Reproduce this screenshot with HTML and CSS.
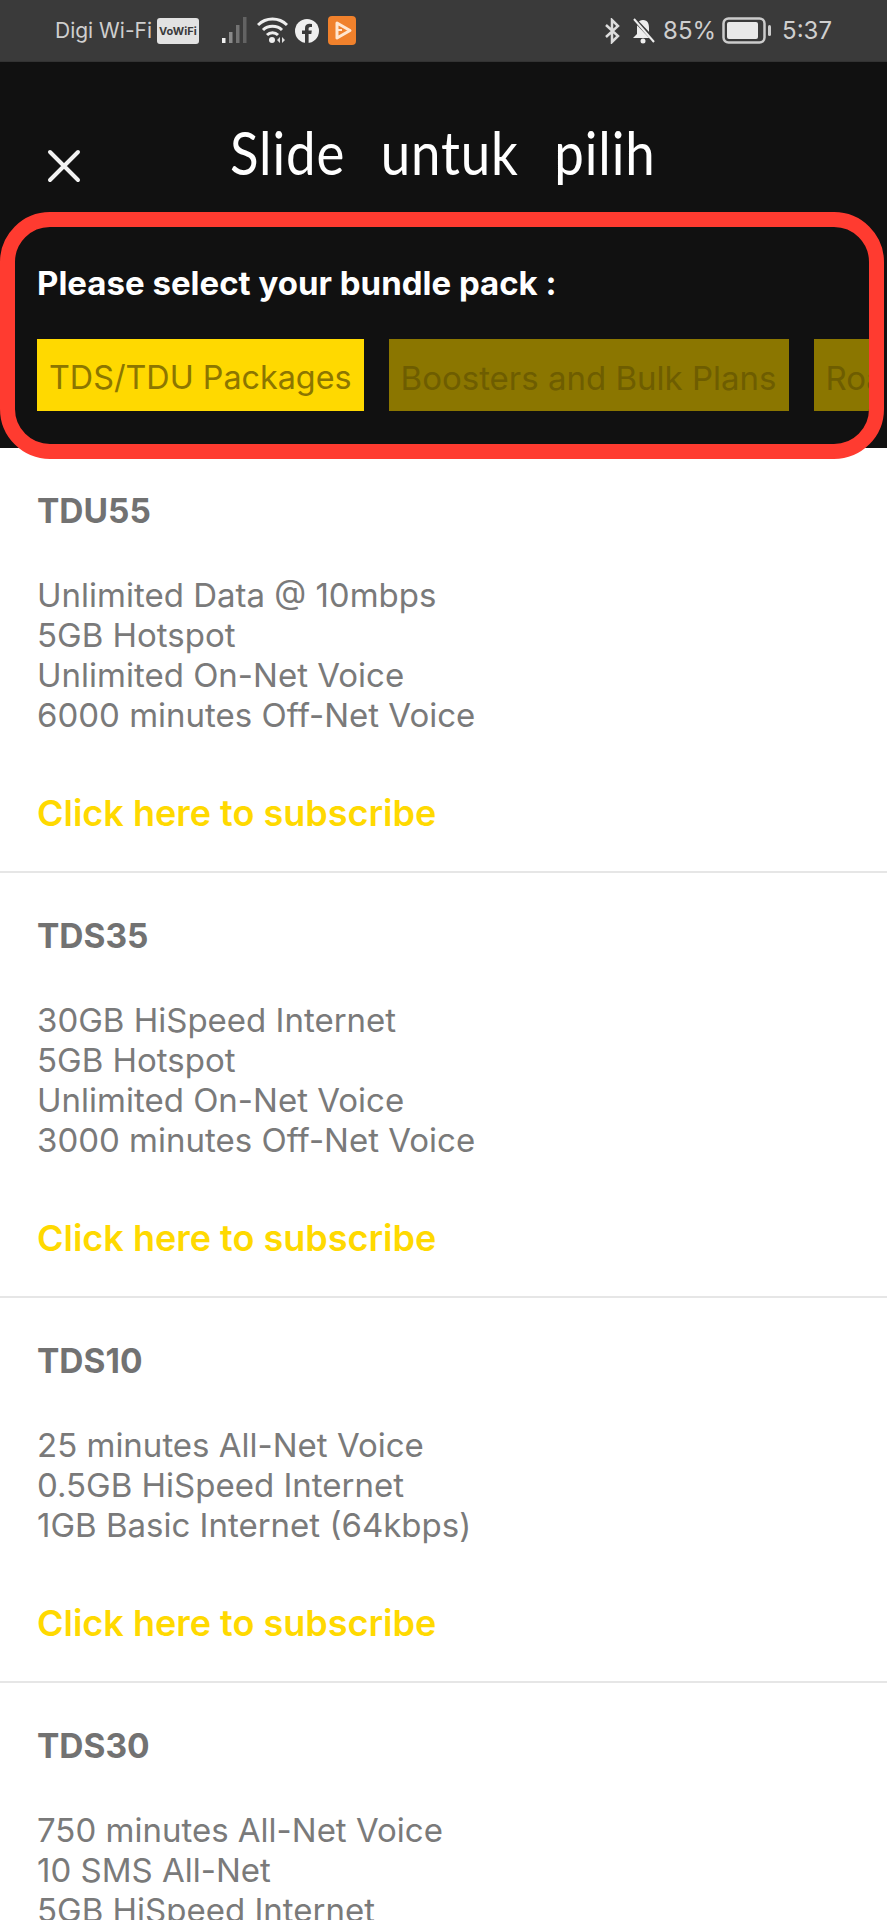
FILE: index.html
```html
<!DOCTYPE html>
<html lang="en">
<head>
  <meta charset="UTF-8">
  <title>Select bundle pack</title>
  <link rel="stylesheet" href="styles.css">
</head>
<body>
  <div class="screen">
    <div class="status-bar">
      <div class="status-left">
        <span class="carrier">Digi Wi-Fi</span>
        <span class="vowifi">VoWiFi</span>
        <svg class="signal" width="27" height="27" viewBox="0 0 27 27">
          <rect x="0" y="21" width="3.500" height="5" fill="#f0f0f0"/>
          <rect x="7" y="15" width="3.500" height="11" fill="#8a8a8a"/>
          <rect x="14" y="8" width="3.500" height="18" fill="#737373"/>
          <rect x="21" y="0" width="3.500" height="26" fill="#636363"/>
        </svg>
        <svg class="wifi" width="31" height="27" viewBox="0 0 31 27">
          <path d="M1 8 C9 0 22 0 30 8" fill="none" stroke="#eee" stroke-width="3"/>
          <path d="M6 13 C11 8 20 8 25 13" fill="none" stroke="#eee" stroke-width="3"/>
          <path d="M10 18 C13 15 18 15 21 18" fill="none" stroke="#eee" stroke-width="3"/>
          <circle cx="15" cy="23" r="3" fill="#eee"/>
          <path d="M23 20 L23 26 L20 23 Z M25 20 L25 26 L28 23 Z" fill="#ddd"/>
        </svg>
        <svg class="fb" width="24" height="24" viewBox="0 0 24 24">
          <circle cx="12" cy="12" r="12" fill="#eee"/>
          <path d="M10 24 V15 H7 V11.5 H10 V9 C10 6 12 4.700 14.500 4.700 L17 5 V8 H15.300 C14 8 13.600 8.800 13.600 9.600 V11.500 H16.800 L16.300 15 H13.600 V24 Z" fill="#3a3a3a"/>
        </svg>
        <svg class="app" width="28" height="29" viewBox="0 0 28 29">
          <rect width="28" height="29" rx="4" fill="#f0812c"/>
          <path d="M9 7 L22 14.500 L9 22 Z" fill="none" stroke="#ffe6d0" stroke-width="3" stroke-linejoin="round"/>
          <path d="M10 14 H14" stroke="#ffe6d0" stroke-width="2"/>
        </svg>
      </div>
      <div class="status-right">
        <svg width="19" height="26" viewBox="0 0 19 26">
          <path d="M3 7 L15 18 L9 24 V2 L15 8 L3 19" fill="none" stroke="#ddd" stroke-width="2.500"/>
        </svg>
        <svg class="bell" width="25" height="27" viewBox="0 0 25 27">
          <path d="M12 3 C7 3 6 7 6 11 V17 L2 21 H22 L18 17 V11 C18 7 17 3 12 3 Z" fill="#eee"/>
          <circle cx="12" cy="24" r="2.500" fill="#eee"/>
          <path d="M2 1 L24 24" stroke="#3a3a3a" stroke-width="4"/>
          <path d="M3 2 L23 25" stroke="#eee" stroke-width="2"/>
        </svg>
        <span class="percent">85%</span>
        <svg class="battery" width="50" height="28" viewBox="0 0 50 28">
          <rect x="1.500" y="1.500" width="41" height="24" rx="5" fill="none" stroke="#ccc" stroke-width="2.500"/>
          <rect x="5" y="5" width="31" height="17" rx="2" fill="#e8e8e8"/>
          <rect x="46" y="8" width="3" height="11" rx="1.500" fill="#ccc"/>
        </svg>
        <span class="clock">5:37</span>
      </div>
    </div>

    <div class="header">
      <div class="title-row">
        <svg class="close" width="34" height="34" viewBox="0 0 34 34">
          <path d="M3 3 L31 31 M31 3 L3 31" stroke="#f2f2f2" stroke-width="4" stroke-linecap="round"/>
        </svg>
        <span class="slide-note">Slide untuk pilih</span>
      </div>
      <div class="bundle-panel">
        <h2>Please select your bundle pack :</h2>
        <div class="tabs">
          <span class="tab active">TDS/TDU Packages</span>
          <span class="tab">Boosters and Bulk Plans</span>
          <span class="tab">Roaming</span>
        </div>
      </div>
    </div>

    <div class="plan">
      <h3>TDU55</h3>
      <p>Unlimited Data @ 10mbps<br>5GB Hotspot<br>Unlimited On-Net Voice<br>6000 minutes Off-Net Voice</p>
      <a class="subscribe">Click here to subscribe</a>
    </div>
    <div class="plan">
      <h3>TDS35</h3>
      <p>30GB HiSpeed Internet<br>5GB Hotspot<br>Unlimited On-Net Voice<br>3000 minutes Off-Net Voice</p>
      <a class="subscribe">Click here to subscribe</a>
    </div>
    <div class="plan">
      <h3>TDS10</h3>
      <p>25 minutes All-Net Voice<br>0.5GB HiSpeed Internet<br>1GB Basic Internet (64kbps)</p>
      <a class="subscribe">Click here to subscribe</a>
    </div>
    <div class="plan">
      <h3>TDS30</h3>
      <p>750 minutes All-Net Voice<br>10 SMS All-Net<br>5GB HiSpeed Internet</p>
    </div>
  </div>
</body>
</html>
```

FILE: styles.css
```css
body {
  margin: 0;
  font-family: Inter, "Noto Sans", sans-serif;
  background: #ffffff;
}

.screen {
  width: 887px;
  height: 1920px;
  overflow: hidden;
}

.status-bar {
  height: 61px;
  background: #3a3a3a;
  border-bottom: 1px solid #333;
  display: flex;
  justify-content: space-between;
  align-items: center;
  padding: 0 55px;
  color: #cfcfcf;
  font-size: 24px;
}

.status-left,
.status-right {
  display: flex;
  align-items: center;
}

.carrier {
  font-size: 21px;
}

.vowifi {
  margin-left: 5px;
  background: #e2e2e2;
  color: #3a3a3a;
  font-size: 11px;
  font-weight: bold;
  padding: 6px 2px;
  border-radius: 3px;
}

.signal {
  margin-left: 23px;
}

.wifi {
  margin-left: 8px;
}

.fb {
  margin-left: 7px;
}

.app {
  margin-left: 9px;
}

.bell {
  margin-left: 9px;
}

.percent {
  margin-left: 7px;
}

.battery {
  margin-left: 6px;
}

.clock {
  margin-left: 10px;
}

.header {
  background: #111111;
  height: 386px;
}

.title-row {
  height: 150px;
  display: flex;
  align-items: flex-end;
  padding-left: 47px;
}

.close {
  margin-bottom: 29px;
}

.slide-note {
  margin-left: 149px;
  margin-bottom: 24px;
  color: #ffffff;
  font-family: Lato, sans-serif;
  font-size: 60px;
  letter-spacing: 1px;
  word-spacing: 24px;
  white-space: nowrap;
  transform: scaleX(0.88);
  transform-origin: left center;
}

.bundle-panel {
  position: relative;
  box-sizing: border-box;
  width: 884px;
  height: 247px;
  border: 15px solid #ff3b30;
  border-radius: 50px;
  background: #111111;
  overflow: hidden;
}

.bundle-panel h2 {
  margin: 36px 0 0 22px;
  color: #ffffff;
  font-size: 33px;
  font-weight: bold;
  line-height: 40px;
}

.tabs {
  display: flex;
  gap: 25px;
  margin: 36px 0 0 22px;
}

.tab {
  flex: none;
  height: 72px;
  line-height: 78px;
  padding: 0 12px;
  font-size: 33px;
  background: #8b7600;
  color: #6e5d00;
  white-space: nowrap;
}

.tab.active {
  font-size: 32.3px;
  background: #ffd900;
  color: #8c7600;
}

.plan {
  padding: 43px 37px 38px;
  border-bottom: 2px solid #e6e6e6;
}

.plan h3 {
  margin: 0;
  color: #727272;
  font-size: 33.5px;
  line-height: 40px;
}

.plan p {
  margin: 44px 0 0;
  color: #7a7a7a;
  font-size: 33px;
  line-height: 40px;
}

.subscribe {
  display: block;
  margin-top: 58px;
  color: #ffd900;
  font-size: 36px;
  font-weight: 600;
  line-height: 40px;
}
```
